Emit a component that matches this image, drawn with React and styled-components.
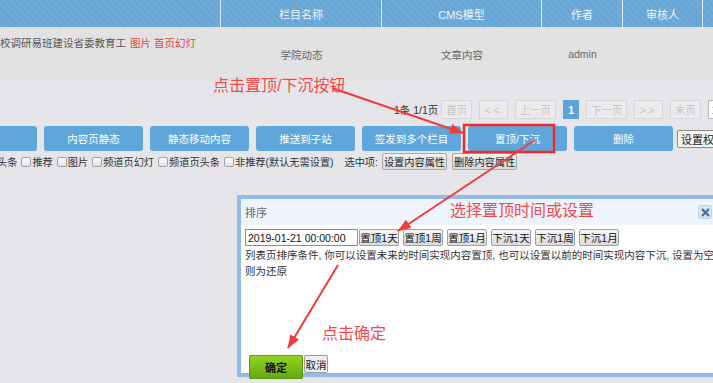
import React from 'react';
import styled, { createGlobalStyle } from 'styled-components';

const GlobalStyle = createGlobalStyle`
  html, body {
    margin: 0;
    padding: 0;
  }
  body {
    font-family: "Liberation Sans", "Noto Sans CJK SC", sans-serif;
    background: #e6e6ea;
  }
`;

const Page = styled.div`
  position: relative;
  width: 713px;
  height: 383px;
  overflow: hidden;
  background: #e6e6ea;
  font-size: 10.5px;
  color: #333;
`;

const cols = '221px 161px 160px 81px 80px 1fr';

const TableHead = styled.div`
  display: grid;
  grid-template-columns: ${cols};
  height: 27px;
  background-color: #68a6d5;
  background-image: repeating-linear-gradient(
    45deg,
    rgba(255, 255, 255, 0.06) 0 2px,
    transparent 2px 5px
  );
`;

const HeadCell = styled.div`
  display: flex;
  align-items: center;
  justify-content: center;
  color: #eef5fb;
  font-size: 11px;
  border-right: 1px solid rgba(255, 255, 255, 0.75);
  &:last-child {
    border-right: none;
  }
`;

const DataRow = styled.div`
  display: grid;
  grid-template-columns: ${cols};
  height: 54px;
  background: #e2e2e2;
  color: #666;
`;

const TitleCell = styled.div`
  padding-top: 10px;
  line-height: 12px;
  white-space: nowrap;
  color: #555;
`;

const Tag = styled.span`
  color: #ea4242;
  margin-left: 4px;
`;

const Cell = styled.div`
  display: flex;
  align-items: center;
  justify-content: center;
`;

const Pager = styled.div`
  display: flex;
  align-items: center;
  gap: 7px;
  height: 19px;
  margin-top: 19px;
  padding-left: 394px;
  white-space: nowrap;
`;

const PageInfo = styled.span`
  color: #333;
  margin-right: -4px;
`;

const PageBtn = styled.span`
  display: flex;
  align-items: center;
  justify-content: center;
  height: 19px;
  box-sizing: border-box;
  padding: 0 4px;
  border: 1px solid ${p => (p.$active ? '#5ca4d8' : '#d6d6d6')};
  background: ${p => (p.$active ? '#5ca4d8' : '#ebebee')};
  color: ${p => (p.$active ? '#fff' : '#c4c4c4')};
  font-weight: ${p => (p.$active ? 'bold' : 'normal')};
  letter-spacing: ${p => (p.$spaced ? '3px' : '0')};
`;

const PageInput = styled.span`
  display: flex;
  align-items: center;
  height: 19px;
  width: 30px;
  box-sizing: border-box;
  padding-left: 3px;
  border: 1px solid #b8b8b8;
  background: #fff;
  color: #222;
`;

const ActionBar = styled.div`
  display: flex;
  align-items: center;
  gap: 7px;
  height: 25px;
  margin-top: 7px;
  margin-left: -62px;
  white-space: nowrap;
`;

const ActionBtn = styled.span`
  flex: none;
  display: flex;
  align-items: center;
  justify-content: center;
  width: 99px;
  height: 25px;
  border-radius: 3px;
  background: #5fa6da;
  color: #fff;
  font-size: 10.5px;
`;

const GrayBtn = styled.span`
  flex: none;
  display: flex;
  align-items: center;
  height: 18px;
  box-sizing: border-box;
  margin-left: -3px;
  padding: 0 3px;
  border: 1px solid #8a8a8a;
  border-radius: 2px;
  background: #f4f4f4;
  color: #222;
  font-size: 11px;
`;

const CheckRow = styled.div`
  display: flex;
  align-items: center;
  height: 17px;
  margin-top: 2px;
  margin-left: -3px;
  white-space: nowrap;
  color: #333;
  font-size: 10.2px;
`;

const Check = styled.span`
  display: inline-block;
  flex: none;
  width: 10px;
  height: 10px;
  box-sizing: border-box;
  margin: 0 1px 0 4px;
  border: 1px solid #a0a0a0;
  border-radius: 2px;
  background: linear-gradient(#fdfdfd, #e2e2e2);
`;

const Picked = styled.span`
  margin-left: 11px;
`;

const SmallBtn = styled.span`
  display: flex;
  align-items: center;
  height: 17px;
  box-sizing: border-box;
  margin-left: ${p => p.$gap || 5}px;
  padding: 0 1px;
  border: 1px solid #a8a8a8;
  border-radius: 2px;
  background: linear-gradient(#f2f2f2, #d9d9d9);
  color: #222;
`;

const Dialog = styled.div`
  position: absolute;
  left: 237px;
  top: 195px;
  width: 480px;
  height: 182px;
  box-sizing: border-box;
  border: 4px solid #93bbe8;
  background: #fff;
  display: flex;
  flex-direction: column;
`;

const DialogHead = styled.div`
  flex: none;
  height: 26px;
  display: flex;
  align-items: center;
  justify-content: space-between;
  padding: 0 1px 0 4px;
  background: #eef4fc;
  color: #666;
  font-size: 11px;
`;

const CloseBtn = styled.span`
  display: flex;
  align-items: center;
  justify-content: center;
  width: 14px;
  height: 14px;
  box-sizing: border-box;
  border: 1px solid #c3d1e1;
  border-radius: 2px;
  background: #dae4ef;
`;

const DialogBody = styled.div`
  flex: 1;
  display: flex;
  flex-direction: column;
  padding: 4px 0 0 4px;
`;

const TimeRow = styled.div`
  display: flex;
  align-items: center;
  gap: 4px;
  height: 17px;
`;

const DateInput = styled.span`
  display: flex;
  align-items: center;
  width: 113px;
  height: 17px;
  box-sizing: border-box;
  margin-right: -3px;
  padding: 0 2px;
  border: 1px solid #8e8e8e;
  color: #111;
  font-size: 10.5px;
`;

const TimeBtn = styled.span`
  display: flex;
  align-items: center;
  justify-content: center;
  width: 40px;
  height: 17px;
  box-sizing: border-box;
  border: 1px solid #a0a0a0;
  border-radius: 2px;
  background: linear-gradient(#f5f5f5, #dcdcdc);
  color: #111;
  white-space: nowrap;
`;

const Desc = styled.p`
  margin: 1px 0 0;
  line-height: 16px;
  white-space: nowrap;
  color: #333;
`;

const Footer = styled.div`
  display: flex;
  align-items: flex-start;
  margin: auto 0 -6px 4px;
`;

const OkBtn = styled.span`
  display: flex;
  align-items: center;
  justify-content: center;
  width: 54px;
  height: 24px;
  box-sizing: border-box;
  border: 1px solid #5c9b12;
  border-radius: 1px;
  background: linear-gradient(#93d324, #64aa0d);
  color: #111;
  font-weight: bold;
  font-size: 11px;
`;

const CancelBtn = styled.span`
  display: flex;
  align-items: center;
  justify-content: center;
  width: 24px;
  height: 18px;
  box-sizing: border-box;
  margin-left: 1px;
  border: 1px solid #9a9a9a;
  border-radius: 2px;
  background: #f0f0f0;
  color: #111;
  white-space: nowrap;
`;

const Note = styled.div`
  position: absolute;
  left: ${p => p.$x}px;
  top: ${p => p.$y}px;
  color: #f24a4a;
  font-size: 16px;
  line-height: 18px;
  white-space: nowrap;
`;

const Overlay = styled.svg`
  position: absolute;
  left: 0;
  top: 0;
  pointer-events: none;
`;

const actions = ['', '内容页静态', '静态移动内容', '推送到子站', '签发到多个栏目', '置顶/下沉', '删除'];
const flags = ['推荐', '图片', '频道页幻灯', '频道页头条', '非推荐(默认无需设置)'];
const times = ['置顶1天', '置顶1周', '置顶1月', '下沉1天', '下沉1周', '下沉1月'];

const App = () => (
  <Page>
    <GlobalStyle />
    <TableHead>
      <HeadCell />
      <HeadCell>栏目名称</HeadCell>
      <HeadCell>CMS模型</HeadCell>
      <HeadCell>作者</HeadCell>
      <HeadCell>审核人</HeadCell>
      <HeadCell />
    </TableHead>
    <DataRow>
      <TitleCell>
        校调研易班建设省委教育工<Tag>图片 首页幻灯</Tag>
      </TitleCell>
      <Cell>学院动态</Cell>
      <Cell>文章内容</Cell>
      <Cell>admin</Cell>
      <Cell />
      <Cell />
    </DataRow>

    <Pager>
      <PageInfo>1条 1/1页</PageInfo>
      <PageBtn>首页</PageBtn>
      <PageBtn $spaced>&lt;&lt;</PageBtn>
      <PageBtn>上一页</PageBtn>
      <PageBtn $active>1</PageBtn>
      <PageBtn>下一页</PageBtn>
      <PageBtn $spaced>&gt;&gt;</PageBtn>
      <PageBtn>末页</PageBtn>
      <PageInput>1</PageInput>
    </Pager>

    <ActionBar>
      {actions.map((a, i) => (
        <ActionBtn key={i}>{a}</ActionBtn>
      ))}
      <GrayBtn>设置权限</GrayBtn>
    </ActionBar>

    <CheckRow>
      <span>头条</span>
      {flags.map(f => (
        <React.Fragment key={f}>
          <Check />
          <span>{f}</span>
        </React.Fragment>
      ))}
      <Picked>选中项:</Picked>
      <SmallBtn $gap={4}>设置内容属性</SmallBtn>
      <SmallBtn>删除内容属性</SmallBtn>
    </CheckRow>

    <Dialog>
      <DialogHead>
        <span>排序</span>
        <CloseBtn>
          <svg width="9" height="9" viewBox="0 0 9 9">
            <path d="M1 1 L8 8 M8 1 L1 8" stroke="#3f6f9f" strokeWidth="2.2" />
          </svg>
        </CloseBtn>
      </DialogHead>
      <DialogBody>
        <TimeRow>
          <DateInput>2019-01-21 00:00:00</DateInput>
          {times.map(t => (
            <TimeBtn key={t}>{t}</TimeBtn>
          ))}
        </TimeRow>
        <Desc>
          列表页排序条件, 你可以设置未来的时间实现内容置顶, 也可以设置以前的时间实现内容下沉, 设置为空
          <br />
          则为还原
        </Desc>
        <Footer>
          <OkBtn>确定</OkBtn>
          <CancelBtn>取消</CancelBtn>
        </Footer>
      </DialogBody>
    </Dialog>

    <Overlay width="713" height="383" viewBox="0 0 713 383">
      <defs>
        <marker
          id="head"
          markerUnits="userSpaceOnUse"
          markerWidth="14"
          markerHeight="10"
          refX="13"
          refY="5"
          orient="auto"
        >
          <path d="M0 0 L14 5 L0 10 z" fill="#f03c3c" />
        </marker>
      </defs>
      <rect x="464" y="125" width="90" height="27" fill="none" stroke="#ee2a2a" strokeWidth="2.5" />
      <line x1="332" y1="88" x2="463" y2="133" stroke="#f03c3c" strokeWidth="2" markerEnd="url(#head)" />
      <line x1="535" y1="140" x2="398" y2="231" stroke="#f03c3c" strokeWidth="2" markerEnd="url(#head)" />
      <line x1="338" y1="265" x2="288" y2="348" stroke="#f03c3c" strokeWidth="2" markerEnd="url(#head)" />
    </Overlay>

    <Note $x={213} $y={77}>点击置顶/下沉按钮</Note>
    <Note $x={450} $y={202}>选择置顶时间或设置</Note>
    <Note $x={322} $y={325}>点击确定</Note>
  </Page>
);

export default App;
